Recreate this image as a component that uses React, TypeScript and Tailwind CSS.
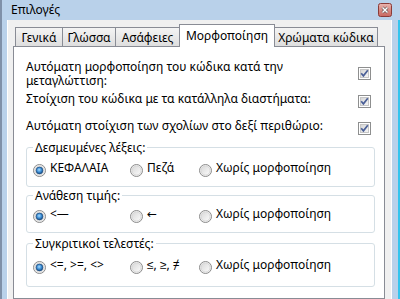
import React from "react";

function Checkbox() {
  return (
    <svg width="13" height="13" viewBox="0 0 13 13" className="block shrink-0">
      <defs>
        <linearGradient id="cbg" x1="0" y1="0" x2="1" y2="1">
          <stop offset="0" stopColor="#d4d4d4" />
          <stop offset="1" stopColor="#f7f7f7" />
        </linearGradient>
      </defs>
      <rect x="0.5" y="0.5" width="12" height="12" fill="#ffffff" stroke="#8e8f8f" />
      <rect x="2.5" y="2.5" width="8" height="8" fill="url(#cbg)" stroke="#c6c6c6" />
      <path d="M3.2 6.2 L5.4 8.8 L9.8 3.2" stroke="#4a5f97" strokeWidth="1.7" fill="none" />
    </svg>
  );
}

function Radio({ checked }: { checked?: boolean }) {
  return (
    <svg width="13" height="13" viewBox="0 0 13 13" className="block shrink-0">
      <defs>
        <linearGradient id="rbg" x1="0" y1="0" x2="1" y2="1">
          <stop offset="0" stopColor="#d8d8d8" />
          <stop offset="1" stopColor="#fbfbfb" />
        </linearGradient>
        <radialGradient id="rdot" cx="0.45" cy="0.4" r="0.6">
          <stop offset="0" stopColor="#a8dcff" />
          <stop offset="0.55" stopColor="#3d8fd6" />
          <stop offset="1" stopColor="#164a80" />
        </radialGradient>
      </defs>
      <circle cx="6.5" cy="6.5" r="6" fill="#f4f4f4" stroke="#8b8b8b" />
      <circle cx="6.5" cy="6.5" r="4.6" fill="url(#rbg)" stroke="#cfcfcf" strokeWidth="0.8" />
      {checked && <circle cx="6.5" cy="6.5" r="3.4" fill="url(#rdot)" stroke="#1d4e82" strokeWidth="0.7" />}
    </svg>
  );
}

function CloseButton() {
  return (
    <svg width="14" height="14" viewBox="0 0 14 14" className="block">
      <defs>
        <linearGradient id="clg" x1="0" y1="0" x2="0" y2="1">
          <stop offset="0" stopColor="#e9b5b0" />
          <stop offset="0.5" stopColor="#d98b84" />
          <stop offset="1" stopColor="#c9675f" />
        </linearGradient>
      </defs>
      <rect x="0.5" y="0.5" width="13" height="13" rx="2" fill="url(#clg)" stroke="#8a3b38" />
      <path d="M4.5 4.5 L9.5 9.5 M9.5 4.5 L4.5 9.5" stroke="#5a4545" strokeWidth="2.6" />
      <path d="M4.5 4.5 L9.5 9.5 M9.5 4.5 L4.5 9.5" stroke="#ffffff" strokeWidth="1.5" />
    </svg>
  );
}

const tabs = [
  { label: "Γενικά", cls: "w-[48px]" },
  { label: "Γλώσσα", cls: "w-[54px] -ml-px" },
  { label: "Ασάφειες", cls: "w-[65px] -ml-px" },
  { label: "Μορφοποίηση", cls: "w-[96px] -ml-px", sel: true },
  { label: "Χρώματα κώδικα", cls: "w-[104px] -ml-px" },
];

function Group({
  title,
  options,
  boxCls,
  rowCls,
}: {
  title: string;
  options: React.ReactNode[];
  boxCls: string;
  rowCls: string;
}) {
  const colCls = ["w-[97px]", "w-[69px]", "flex-1"];
  return (
    <fieldset className={`w-[349px] border border-[#d5dfe5] rounded-[3px] px-[6px] ${boxCls}`}>
      <legend className="px-[2px] leading-[13px]">{title}</legend>
      <div className={`flex h-[16px] items-start ${rowCls}`}>
        {options.map((o, i) => (
          <div key={i} className={`flex items-start ${colCls[i]}`}>
            <div className="mt-[3px]">
              <Radio checked={i === 0} />
            </div>
            <span className="ml-[4px] leading-[13px] whitespace-nowrap">{o}</span>
          </div>
        ))}
      </div>
    </fieldset>
  );
}

export default function App() {
  return (
    <div className="w-[400px] h-[299px] overflow-hidden flex flex-col bg-[#b9d1ea] border-l-2 border-[#7f90a8] font-['Noto_Sans',sans-serif] text-[12px] text-black">
      <div className="h-[20px] shrink-0 flex items-center pl-[9px] pr-[8px]">
        <span className="flex-1 leading-[16px]">Επιλογές</span>
        <CloseButton />
      </div>
      <div className="flex-1 flex min-h-0 pl-[5px]">
        <div className="w-[385px] border-l border-r border-white bg-[#f0f0f0] flex flex-col pt-[4px] pl-[5px]">
          <div className="flex items-end h-[23px] -mb-px pl-[2px] relative z-10">
            {tabs.map((t, i) =>
              t.sel ? (
                <div
                  key={i}
                  className={`${t.cls} h-[23px] border border-b-0 border-[#898c95] bg-white flex items-center justify-center leading-[13px] relative z-10 pb-[1px]`}
                >
                  {t.label}
                </div>
              ) : (
                <div
                  key={i}
                  className={`${t.cls} h-[19px] mb-px border border-b-0 border-[#898c95] bg-linear-to-b from-[#f4f4f4] to-[#dedede] flex items-center justify-center leading-[13px] whitespace-nowrap`}
                >
                  {t.label}
                </div>
              )
            )}
          </div>
          <div className="w-[372px] flex-1 border border-[#898c95] bg-white pl-[12px] pr-[13px] flex flex-col">
            <div className="flex mt-[13px] h-[28px] items-start">
              <div className="flex-1 leading-[14px]">
                <div>Αυτόματη μορφοποίηση του κώδικα κατά την</div>
                <div>μεταγλώττιση:</div>
              </div>
              <div className="mt-[7px]">
                <Checkbox />
              </div>
            </div>
            <div className="flex mt-[4px] h-[16px] items-start">
              <div className="flex-1 leading-[13px]">Στοίχιση του κώδικα με τα κατάλληλα διαστήματα:</div>
              <div className="mt-[3px]">
                <Checkbox />
              </div>
            </div>
            <div className="flex mt-[11px] h-[16px] items-start">
              <div className="flex-1 leading-[13px]">Αυτόματη στοίχιση των σχολίων στο δεξί περιθώριο:</div>
              <div className="mt-[3px]">
                <Checkbox />
              </div>
            </div>
            <Group
              title="Δεσμευμένες λέξεις:"
              options={["ΚΕΦΑΛΑΙΑ", "Πεζά", "Χωρίς μορφοποίηση"]}
              boxCls="mt-[6px] h-[46px]"
              rowCls="mt-[7px]"
            />
            <Group
              title="Ανάθεση τιμής:"
              options={[
                "<—",
                <span key="a" className="font-['DejaVu_Sans',sans-serif] text-[12px]">←</span>,
                "Χωρίς μορφοποίηση",
              ]}
              boxCls="mt-[2px] h-[44px]"
              rowCls="mt-[5px]"
            />
            <Group
              title="Συγκριτικοί τελεστές:"
              options={["<=, >=, <>", "≤, ≥, ≠", "Χωρίς μορφοποίηση"]}
              boxCls="mt-[4px] h-[50px]"
              rowCls="mt-[8px]"
            />
          </div>
        </div>
        <div className="w-[6px]" />
        <div className="w-[2px] bg-[#33c4ee]" />
      </div>
    </div>
  );
}
